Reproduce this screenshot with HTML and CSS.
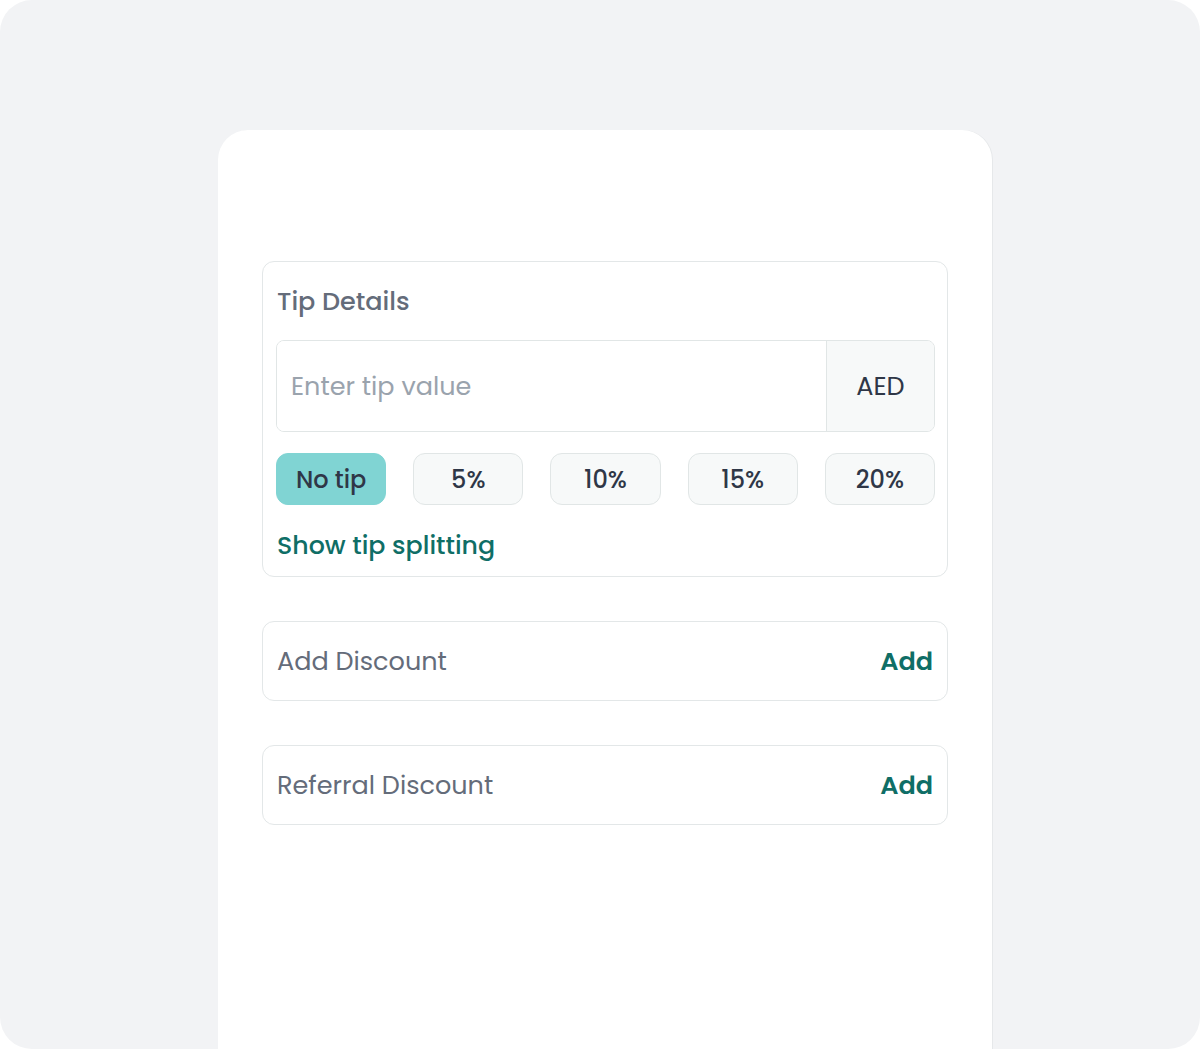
FILE: index.html
```html
<!DOCTYPE html>
<html lang="en">
<head>
<meta charset="utf-8">
<title>Tip Details</title>
<link rel="stylesheet" href="styles.css">
</head>
<body>
<div class="frame">
  <div class="card">
    <section class="box tip-box">
      <h2 class="box-title">Tip Details</h2>
      <div class="input-group">
        <input class="tip-input" type="text" placeholder="Enter tip value">
        <span class="addon">AED</span>
      </div>
      <div class="chips">
        <button class="chip active">No tip</button>
        <button class="chip">5%</button>
        <button class="chip">10%</button>
        <button class="chip">15%</button>
        <button class="chip">20%</button>
      </div>
      <a class="link">Show tip splitting</a>
    </section>
    <section class="box row-box">
      <span class="row-label">Add Discount</span>
      <a class="row-action">Add</a>
    </section>
    <section class="box row-box">
      <span class="row-label">Referral Discount</span>
      <a class="row-action">Add</a>
    </section>
  </div>
</div>
</body>
</html>
```
FILE: styles.css
```css
* { box-sizing: border-box; }
html, body { margin: 0; padding: 0; background: #ffffff; }
body {
  font-family: "Poppins", "Open Sans", "Noto Sans", sans-serif;
  width: 1200px;
  height: 1049px;
  overflow: hidden;
}
.frame {
  width: 1200px;
  height: 1049px;
  background: #f2f3f5;
  border-radius: 32px;
  padding: 130px 0 0 218px;
  overflow: hidden;
}
.card {
  width: 774px;
  height: 1000px;
  background: #ffffff;
  border-radius: 30px 30px 0 0;
  box-shadow: 1px 0 0 #e6e8ea;
  padding: 131px 44px 0 44px;
  display: flex;
  flex-direction: column;
  gap: 44px;
}
.box {
  border: 1px solid #e3e7e8;
  border-radius: 12px;
  background: #fff;
}
.tip-box {
  padding: 14px 12px 14px 13px;
  display: flex;
  flex-direction: column;
}
.box-title {
  margin: 0;
  padding: 7px 0 0 1px;
  font-size: 25.5px;
  font-weight: 500;
  color: #646c7a;
  line-height: 36px;
  height: 64px;
}
.input-group {
  display: flex;
  height: 92px;
  border: 1px solid #e1e6e6;
  border-radius: 8px;
  overflow: hidden;
}
.tip-input {
  flex: 1;
  min-width: 0;
  border: none;
  outline: none;
  padding: 0 14px;
  font-family: inherit;
  font-size: 25.5px;
  color: #333;
  background: #fff;
}
.tip-input::placeholder { color: #9aa3ad; }
.addon {
  width: 108px;
  border-left: 1px solid #e1e6e6;
  background: #f7f9f9;
  display: flex;
  align-items: center;
  justify-content: center;
  font-size: 25.5px;
  color: #2f3747;
}
.chips {
  display: flex;
  gap: 27px;
  margin-top: 21px;
}
.chip {
  flex: 1;
  height: 52px;
  border: 1px solid #e1e6e6;
  border-radius: 12px;
  background: #f7f9f9;
  font-family: inherit;
  font-size: 24px;
  font-weight: 500;
  color: #2f3747;
  padding: 0;
}
.chip.active {
  background: #80d4d3;
  border-color: #80d4d3;
}
.link {
  margin-top: 23px;
  font-size: 25.3px;
  font-weight: 500;
  color: #0f6e66;
  line-height: 34px;
  padding-left: 1px;
}
.row-box {
  height: 80px;
  display: flex;
  align-items: center;
  justify-content: space-between;
  padding: 0 14px 0 14px;
}
.row-label {
  font-size: 25.5px;
  color: #646c7a;
}
.row-action {
  font-size: 25.5px;
  font-weight: 600;
  color: #0f6e66;
}
```
